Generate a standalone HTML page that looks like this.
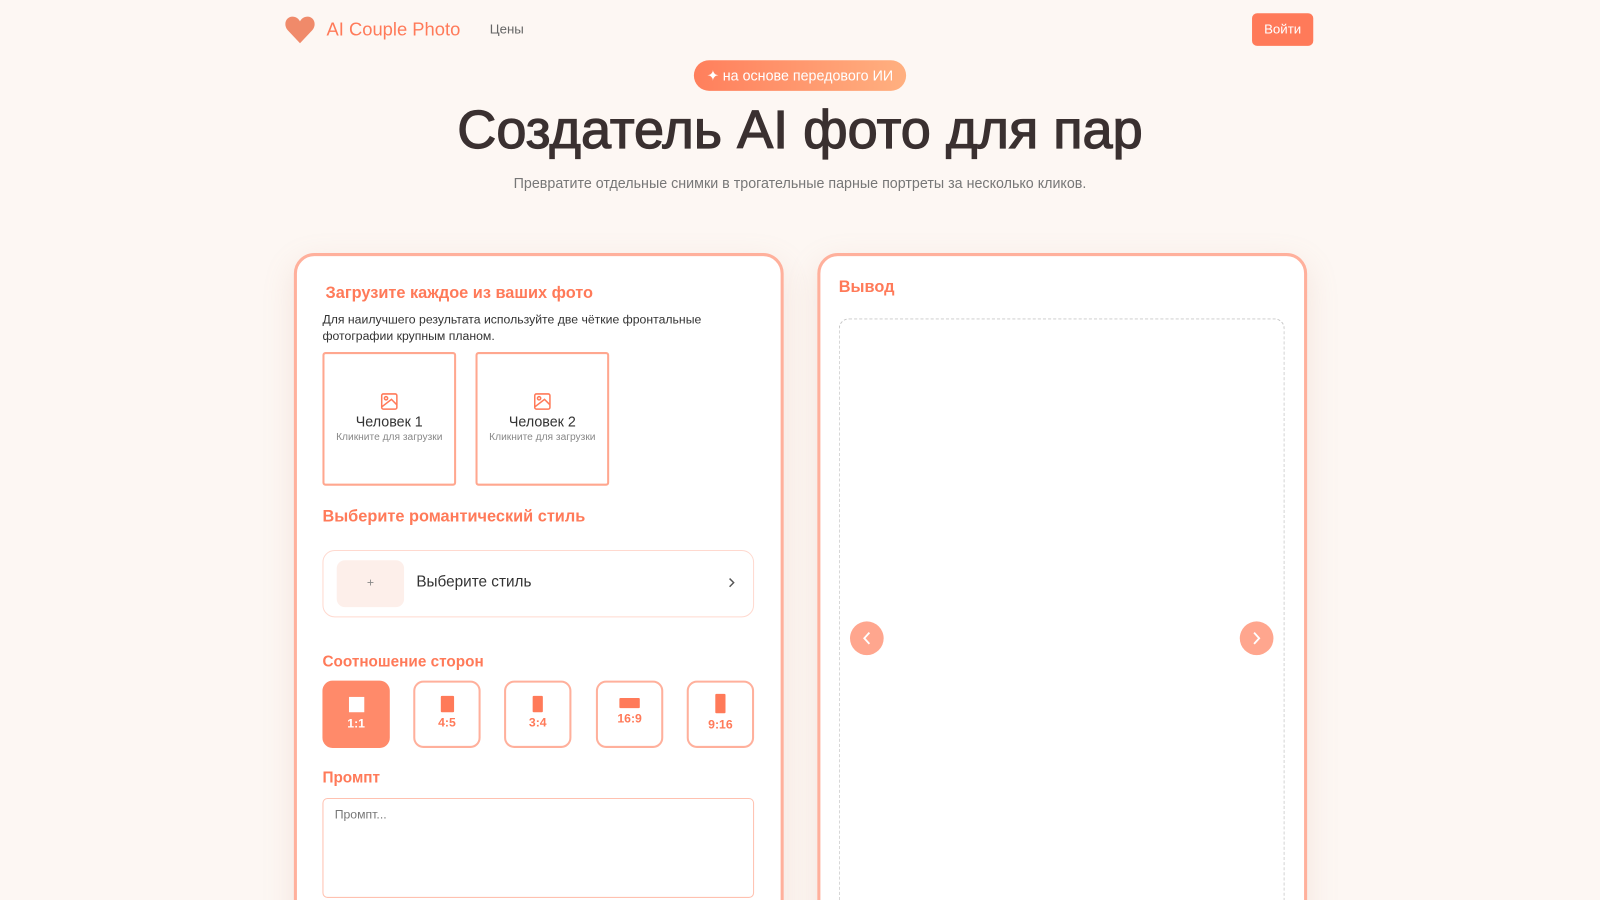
<!DOCTYPE html>
<html><head><meta charset="utf-8"><style>
*{box-sizing:border-box;margin:0;padding:0}
html,body{width:1600px;height:900px;overflow:hidden}
body{background:#fdf7f3;font-family:"Liberation Sans","Noto Sans CJK SC",sans-serif;color:#333}
#w{position:relative;width:1568px;height:882px;overflow:hidden;transform:scale(1.0204);transform-origin:0 0}
.abs{position:absolute}
.card{position:absolute;top:248px;width:480px;height:700px;background:#fff;border:3px solid #ffb09c;border-radius:20px;box-shadow:0 10px 30px rgba(200,150,130,.18)}
.h{color:#ff7a59;font-weight:bold;font-size:16px}
.up{position:absolute;top:345px;width:131px;height:131px;border:2px solid #ffa78f;border-radius:3px;text-align:center}
.ar{position:absolute;top:667px;width:66px;height:66px;border:2px solid #ffb09c;border-radius:10px;text-align:center;color:#ff7a59;font-weight:bold;font-size:12px}
.ar i{display:block;background:#ff7a59;margin:0 auto}
.nb{position:absolute;top:609px;width:33px;height:33px;border-radius:50%;background:#ffa68e}
</style></head><body><div id="w">
<svg class="abs" style="left:278px;top:13px" width="32" height="32" viewBox="0 0 24 24"><path d="M12 22 L3 12.5 C-0.5 8.5 1.5 2.5 6.5 2.5 C9 2.5 11 4 12 6 C13 4 15 2.5 17.5 2.5 C22.5 2.5 24.5 8.5 21 12.5 Z" fill="#f08a6a"/></svg>
<div class="abs" style="left:320px;top:19px;font-size:18px;color:#ff7a59">AI Couple Photo</div>
<div class="abs" style="left:480px;top:21px;font-size:13px;color:#666">Цены</div>
<div class="abs" style="left:1227px;top:13px;width:60px;height:32px;background:#ff7a59;border-radius:5px;color:#fff;font-size:13px;text-align:center;line-height:32px">Войти</div>
<div class="abs" style="left:680px;top:59px;width:208px;height:30px;border-radius:15px;background:linear-gradient(90deg,#ff7f5c,#ffb080);color:#fff;font-size:14px;text-align:center;line-height:30px">✦ на основе передового ИИ</div>
<div class="abs" style="left:0;width:1568px;top:97px;text-align:center;font-size:53px;color:#3a3030;-webkit-text-stroke:1.2px #3a3030">Создатель AI фото для пар</div>
<div class="abs" style="left:0;width:1568px;top:171px;text-align:center;font-size:14px;color:#777">Превратите отдельные снимки в трогательные парные портреты за несколько кликов.</div>

<div class="card" style="left:288px"></div>
<div class="abs h" style="left:319px;top:279px">Загрузите каждое из ваших фото</div>
<div class="abs" style="left:316px;top:305px;font-size:12px;line-height:16px;color:#333;width:420px">Для наилучшего результата используйте две чёткие фронтальные фотографии крупным планом.</div>
<div class="up" style="left:316px"><svg style="margin-top:38px" width="17" height="17" viewBox="0 0 16 16" fill="none" stroke="#ff7a59" stroke-width="1.4"><rect x="1" y="1" width="14" height="14" rx="1.5"/><circle cx="5" cy="5" r="1.5"/><path d="M1 13 L10 6 L15 11"/></svg><div style="font-size:14px;color:#333;margin-top:-2px">Человек 1</div><div style="font-size:10px;color:#888;margin-top:2px">Кликните для загрузки</div></div>
<div class="up" style="left:466px"><svg style="margin-top:38px" width="17" height="17" viewBox="0 0 16 16" fill="none" stroke="#ff7a59" stroke-width="1.4"><rect x="1" y="1" width="14" height="14" rx="1.5"/><circle cx="5" cy="5" r="1.5"/><path d="M1 13 L10 6 L15 11"/></svg><div style="font-size:14px;color:#333;margin-top:-2px">Человек 2</div><div style="font-size:10px;color:#888;margin-top:2px">Кликните для загрузки</div></div>
<div class="abs h" style="left:316px;top:498px">Выберите романтический стиль</div>
<div class="abs" style="left:316px;top:539px;width:423px;height:66px;border:1px solid #ffd9cf;border-radius:12px"></div>
<div class="abs" style="left:330px;top:549px;width:66px;height:46px;background:#fdefea;border-radius:8px;text-align:center;line-height:44px;color:#888;font-size:12px">+</div>
<div class="abs" style="left:408px;top:562px;font-size:15px;color:#333">Выберите стиль</div>
<svg class="abs" style="left:712px;top:565px" width="10" height="12" viewBox="0 0 10 12"><path d="M3 2 L7 6 L3 10" fill="none" stroke="#555" stroke-width="1.4"/></svg>
<div class="abs h" style="left:316px;top:640px;font-size:15px">Соотношение сторон</div>
<div class="ar" style="left:316px;background:#ff8a6a;border-color:#ff8a6a;color:#fff"><i style="width:15px;height:15px;background:#fff;margin-top:14px"></i><div style="margin-top:4px">1:1</div></div>
<div class="ar" style="left:405px"><i style="width:13px;height:16px;margin-top:13px;border-radius:1px"></i><div style="margin-top:3px">4:5</div></div>
<div class="ar" style="left:494px"><i style="width:10px;height:16px;margin-top:13px;border-radius:1px"></i><div style="margin-top:3px">3:4</div></div>
<div class="ar" style="left:584px"><i style="width:20px;height:10px;margin-top:15px;border-radius:1px"></i><div style="margin-top:3px">16:9</div></div>
<div class="ar" style="left:673px"><i style="width:10px;height:19px;margin-top:11px;border-radius:1px"></i><div style="margin-top:4px">9:16</div></div>
<div class="abs h" style="left:316px;top:754px;font-size:15px">Промпт</div>
<div class="abs" style="left:316px;top:782px;width:423px;height:98px;border:1.5px solid #ffc1b0;border-radius:5px;padding:8px 11px;font-size:12px;color:#777">Промпт...</div>

<div class="card" style="left:801px"></div>
<div class="abs h" style="left:822px;top:273px">Вывод</div>
<div class="abs" style="left:822px;top:312px;width:437px;height:620px;border:1px dashed #c8c8c8;border-radius:10px"></div>
<div class="nb" style="left:833px"><svg width="33" height="33" viewBox="0 0 33 33"><path d="M19 11 L14 16.5 L19 22" fill="none" stroke="#fff" stroke-width="1.8"/></svg></div>
<div class="nb" style="left:1215px"><svg width="33" height="33" viewBox="0 0 33 33"><path d="M14 11 L19 16.5 L14 22" fill="none" stroke="#fff" stroke-width="1.8"/></svg></div>
</div></body></html>
